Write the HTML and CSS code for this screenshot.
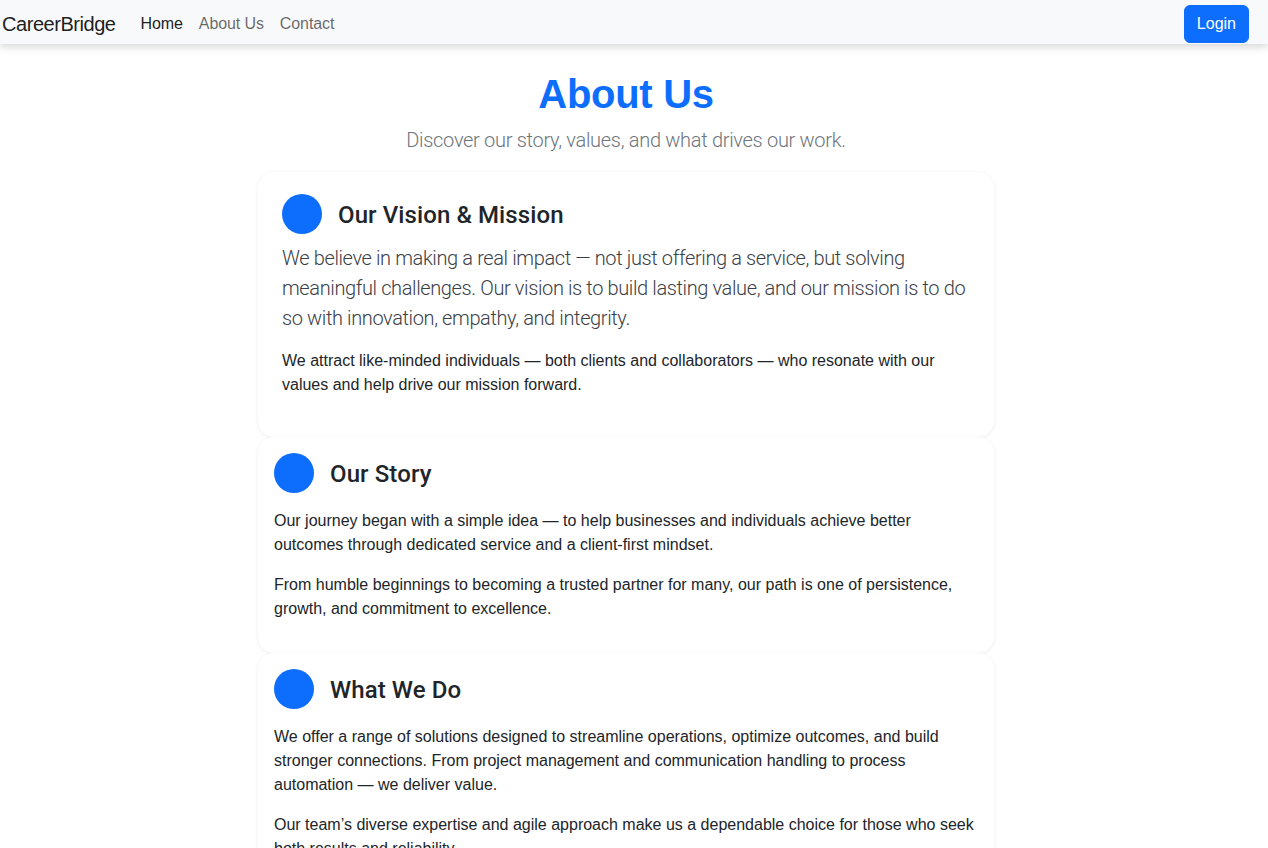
FILE: index.html
```html
<!DOCTYPE html>
<html lang="en">
<head>
<meta charset="utf-8">
<title>About Us - CareerBridge</title>
<link rel="stylesheet" href="styles.css">
</head>
<body>
<nav class="navbar">
  <div class="nav-left">
    <a class="brand" href="#">CareerBridge</a>
    <ul class="nav-links">
      <li><a class="nav-link active" href="#">Home</a></li>
      <li><a class="nav-link" href="#">About Us</a></li>
      <li><a class="nav-link" href="#">Contact</a></li>
    </ul>
  </div>
  <a class="btn-login" href="#">Login</a>
</nav>

<main class="page">
  <div class="container">
    <header class="page-header">
      <h1 class="page-title">About Us</h1>
      <p class="page-sub">Discover our story, values, and what drives our work.</p>
    </header>

    <section class="card card-lg">
      <div class="card-head">
        <span class="dot"></span>
        <h2 class="card-title">Our Vision &amp; Mission</h2>
      </div>
      <p class="lead">We believe in making a real impact — not just offering a service, but solving meaningful challenges. Our vision is to build lasting value, and our mission is to do so with innovation, empathy, and integrity.</p>
      <p class="text">We attract like-minded individuals — both clients and collaborators — who resonate with our values and help drive our mission forward.</p>
    </section>

    <section class="card">
      <div class="card-head">
        <span class="dot"></span>
        <h2 class="card-title">Our Story</h2>
      </div>
      <p class="text">Our journey began with a simple idea — to help businesses and individuals achieve better outcomes through dedicated service and a client-first mindset.</p>
      <p class="text">From humble beginnings to becoming a trusted partner for many, our path is one of persistence, growth, and commitment to excellence.</p>
    </section>

    <section class="card">
      <div class="card-head">
        <span class="dot"></span>
        <h2 class="card-title">What We Do</h2>
      </div>
      <p class="text">We offer a range of solutions designed to streamline operations, optimize outcomes, and build stronger connections. From project management and communication handling to process automation — we deliver value.</p>
      <p class="text">Our team’s diverse expertise and agile approach make us a dependable choice for those who seek both results and reliability.</p>
    </section>
  </div>
</main>
</body>
</html>
```
FILE: styles.css
```css
* { box-sizing: border-box; }

html, body {
  margin: 0;
  padding: 0;
}

body {
  font-family: "Liberation Sans", Arial, sans-serif;
  font-size: 16px;
  line-height: 1.5;
  color: #212529;
  background: #fff;
}

a { text-decoration: none; }

/* Navbar */
.navbar {
  display: flex;
  align-items: center;
  justify-content: space-between;
  height: 44px;
  padding: 4px 19px 0 2px;
  background: #f8f9fa;
  box-shadow: 0 3px 8px rgba(0, 0, 0, 0.16);
  position: relative;
  z-index: 2;
}

.nav-left {
  display: flex;
  align-items: center;
}

.brand {
  font-size: 20px;
  line-height: 30px;
  color: rgba(0, 0, 0, 0.9);
  margin-right: 17px;
  letter-spacing: -0.45px;
}

.nav-links {
  display: flex;
  list-style: none;
  margin: 0;
  padding: 0;
}

.nav-link {
  display: block;
  padding: 8px 8px;
  color: rgba(0, 0, 0, 0.6);
  letter-spacing: -0.1px;
}

.nav-link.active {
  color: rgba(0, 0, 0, 0.9);
}

.btn-login {
  display: inline-block;
  padding: 6px 12px;
  border: 1px solid #0d6efd;
  border-radius: 6px;
  background: #0d6efd;
  color: #fff;
  font-size: 16px;
  line-height: 24px;
}

/* Main */
.page {
  padding-right: 16px;
}

.container {
  width: 736px;
  margin: 0 auto;
}

.page-header {
  text-align: center;
  padding-top: 26px;
}

.page-title {
  margin: 0 0 7px;
  font-size: 40px;
  line-height: 48px;
  font-weight: 700;
  color: #0d6efd;
  letter-spacing: -0.3px;
}

.page-sub {
  margin: 0 0 17px;
  font-family: Roboto, sans-serif;
  font-size: 20px;
  line-height: 30px;
  font-weight: 300;
  color: #6c757d;
  letter-spacing: -0.3px;
}

.card {
  background: #fff;
  border-radius: 16px;
  padding: 16px;
  box-shadow: 0 1px 4px rgba(0, 0, 0, 0.07);
}

.card-lg {
  padding: 22px 24px 24px;
}

.card-head {
  display: flex;
  align-items: center;
  gap: 16px;
  margin-bottom: 16px;
}

.card-lg .card-head {
  margin-bottom: 9px;
}

.dot {
  flex: none;
  width: 40px;
  height: 40px;
  border-radius: 50%;
  background: #0d6efd;
}

.card-title {
  margin: 0;
  padding-top: 2px;
  font-family: Roboto, sans-serif;
  font-size: 24px;
  line-height: 29px;
  font-weight: 500;
  color: #212529;
  letter-spacing: 0.1px;
}

.lead {
  margin: 0 0 16px;
  font-family: Roboto, sans-serif;
  font-size: 20px;
  line-height: 30px;
  font-weight: 300;
  color: #3a4046;
  letter-spacing: -0.38px;
}

.text {
  margin: 0 0 16px;
}
```
